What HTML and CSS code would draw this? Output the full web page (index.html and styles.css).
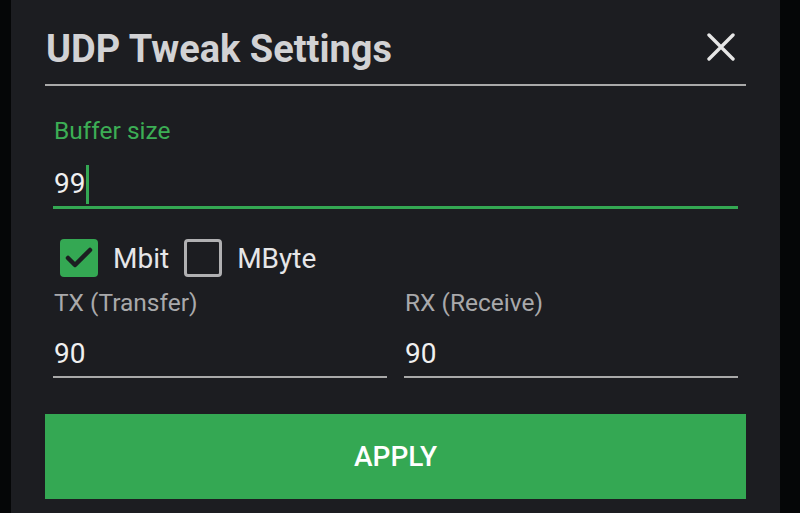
FILE: index.html
```html
<!DOCTYPE html>
<html>
<head>
<meta charset="utf-8">
<link rel="stylesheet" href="styles.css">
</head>
<body>
<div class="panel">
  <div class="header">
    <h1 class="title">UDP Tweak Settings</h1>
    <svg class="close" width="28" height="28" viewBox="0 0 28 28"><path d="M2 2 L26 26 M26 2 L2 26" stroke="#e6e6e6" stroke-width="3.4" stroke-linecap="round"/></svg>
  </div>
  <div class="body">
    <div class="field active">
      <div class="label green">Buffer size</div>
      <div class="value">99<span class="cursor"></span></div>
    </div>
    <div class="checks">
      <span class="box checked"><svg width="38" height="38" viewBox="0 0 38 38"><path d="M8 19 L15 26 L30 11" fill="none" stroke="#1c1d21" stroke-width="4.5" stroke-linecap="round" stroke-linejoin="round"/></svg></span>
      <span class="checklabel">Mbit</span>
      <span class="box"></span>
      <span class="checklabel">MByte</span>
    </div>
    <div class="cols">
      <div class="field">
        <div class="label">TX (Transfer)</div>
        <div class="value">90</div>
      </div>
      <div class="field">
        <div class="label">RX (Receive)</div>
        <div class="value">90</div>
      </div>
    </div>
  </div>
  <button class="apply">APPLY</button>
</div>
</body>
</html>
```
FILE: styles.css
```css
html, body {
  margin: 0;
  padding: 0;
  background: #050607;
  height: 513px;
  overflow: hidden;
}
.panel {
  margin: 0 20px 0 11px;
  height: 513px;
  background: #1c1d21;
  padding: 0 34px;
  box-sizing: border-box;
  font-family: Roboto, "Liberation Sans", sans-serif;
  display: flex;
  flex-direction: column;
}
.header {
  height: 86px;
  border-bottom: 2px solid #a9a9a9;
  display: flex;
  align-items: center;
  justify-content: space-between;
  padding-left: 1px;
  box-sizing: border-box;
  padding-top: 14px;
  flex: none;
}
.title {
  margin: 0;
  font-size: 38px;
  line-height: 44px;
  font-weight: 700;
  color: #d2d2d4;
}
.close {
  margin-right: 11px;
  margin-bottom: 4px;
}
.body {
  padding: 0 8px;
  flex: none;
}
.field {
  display: flex;
  flex-direction: column;
}
.label {
  font-size: 24.5px;
  color: #a9a9ab;
  line-height: 28px;
  padding-left: 1px;
}
.label.green {
  color: #3cae55;
}
.field.active {
  margin-top: 31px;
}
.value {
  font-size: 28px;
  color: #f0f0f0;
  line-height: 40px;
  padding-left: 1px;
  border-bottom: 2px solid #a9a9a9;
  padding-top: 17px;
  padding-bottom: 2px;
  display: flex;
  align-items: center;
}
.field.active .value {
  border-bottom: 3px solid #34a853;
  padding-top: 19px;
  padding-bottom: 2px;
}
.cursor {
  display: inline-block;
  width: 3px;
  height: 39px;
  background: #34a853;
  margin-left: 1px;
}
.checks {
  display: flex;
  align-items: center;
  margin-top: 30px;
  padding-left: 7px;
  height: 38px;
}
.box {
  width: 38px;
  height: 38px;
  box-sizing: border-box;
  border: 3.5px solid #b0b0b2;
  border-radius: 4px;
  flex: none;
}
.box.checked {
  border: none;
  background: #34a853;
}
.box svg {
  display: block;
}
.checklabel {
  font-size: 28px;
  color: #e6e6e8;
  margin: 0 15px 0 15px;
}
.cols {
  display: grid;
  grid-template-columns: 1fr 1fr;
  column-gap: 17px;
  margin-top: 12px;
}
.apply {
  margin-top: 36px;
  height: 85px;
  background: #34a853;
  border: none;
  color: #ffffff;
  font-family: Roboto, "Liberation Sans", sans-serif;
  font-weight: 500;
  font-size: 28px;
  flex: none;
  padding: 0;
}
```
